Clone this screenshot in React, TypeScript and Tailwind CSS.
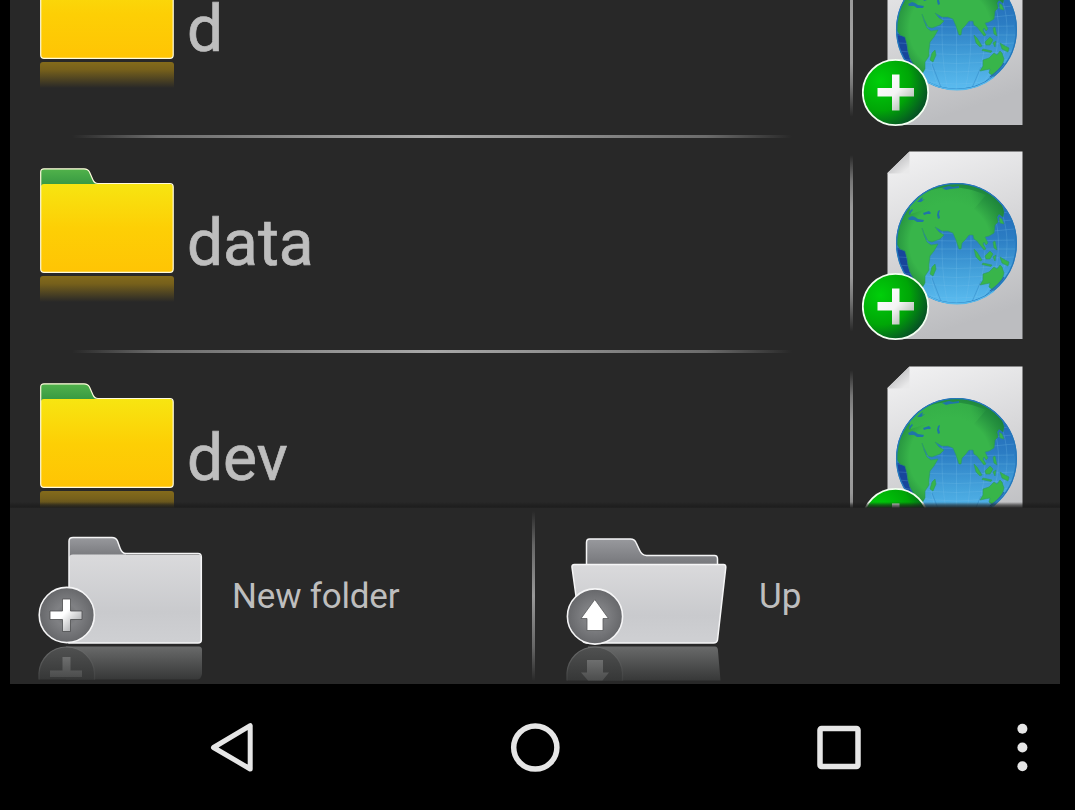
import React from "react";

const LAND = [
  // Eurasia and Africa
  "M7 27 C13 15 22 8 31 4 L38 4 L48 1 L68 0 L79 2 C90 6 99 12 106 22 L108 29 L107 34 L103 31 L101 34 L102 39 L99 42 L98 50 L93 53 L89 54 L92 60 L90 62 L88 59 L87 61 L90 66 L88 67 L81 58 L78 56 L77 52 L73 52 L69 57 L66 60 L65 66 L63 66 L60 57 L57 50 L52 48 L46 48 L39 44 L43 49 L48 52 L44 56 L36 59 L32 58 L28 50 L26 45 L28 52 L31 59 L35 62 L42 61 L38 68 L34 73 L33 81 L33 87 L29 93 L29 100 L26 105 C20 101 17 94 14 89 L12 82 L11 75 L9 68 L4 66 L0 60 C0 46 2 36 7 27 Z",
  // Madagascar
  "M36 84 L39 81 L40 86 L37 93 L34 91 Z",
  // Australia
  "M87 91 L93 89 L98 84 L101 86 L104 82 L106 84 L108 90 L106 97 L101 102 L97 107 L93 104 L94 100 L84 102 L87 97 Z",
  // Sumatra and Java
  "M78 66 L81 69 L86 77 L84 78 L80 74 Z",
  "M87 80 L96 82 L95 83.5 L86 81.5 Z",
  // Borneo
  "M89 73 L94 68 L97 71 L94 76 L90 76 Z",
  // Philippines
  "M97 59 L99 58 L101 67 L98 65 Z",
  // New Guinea
  "M104 74 L109 77 L113 79 L112 83 L106 80 Z",
  // Japan
  "M103 34 L106 36 L108 41 L104 40 Z",
  "M97 74 L100 72 L99 78 Z",
];

const LAKES = [
  "M12 35 L16 33 L19 34 L22 36 L28 37 L27 39 L21 39 L18 37 L13 37 Z",
  "M27 30 L30 29 L33 28 L35 30 L34 31 L31 31 L28 32 Z",
  "M42 28 L44 27 L43 31 L44 35 L42 36 L41 32 Z",
  "M21 19 L24 16 L27 14 L26 17 L29 16 L25 19 Z",
  "M13 29 L16 26 L17 27 L13 32 Z",
  "M46 5 L53 3 L57 4 L63 3 L63 5 L54 6 L50 7 Z",
];

function WebPageIcon() {
  return (
    <svg className="block h-[190px] w-[162px]" viewBox="0 0 162 190" fill="none">
      <defs>
        <linearGradient id="paper" x1="0" y1="0" x2="0.25" y2="1">
          <stop stopColor="#f3f3f4" />
          <stop offset="0.5" stopColor="#d8d8da" />
          <stop offset="1" stopColor="#bcbdc0" />
        </linearGradient>
        <linearGradient id="fold" x1="0.3" y1="0.3" x2="0.8" y2="0.9">
          <stop stopColor="#bcbcbe" />
          <stop offset="1" stopColor="#e9e9ea" />
        </linearGradient>
        <linearGradient id="sea" x1="0" y1="0" x2="0" y2="1">
          <stop stopColor="#1d5eb0" />
          <stop offset="0.45" stopColor="#2b7cc3" />
          <stop offset="0.75" stopColor="#45a3dc" />
          <stop offset="1" stopColor="#5bbcf0" />
        </linearGradient>
        <radialGradient
          id="landShade"
          gradientUnits="userSpaceOnUse"
          cx="54"
          cy="60"
          r="70"
        >
          <stop offset="0.58" stopColor="#064f28" stopOpacity="0" />
          <stop offset="0.8" stopColor="#06582c" stopOpacity="0.38" />
          <stop offset="1" stopColor="#06582c" stopOpacity="0.65" />
        </radialGradient>
        <linearGradient id="northLight" gradientUnits="userSpaceOnUse" x1="20" y1="22" x2="92" y2="8">
          <stop stopColor="#38b54a" stopOpacity="0.9" />
          <stop offset="0.75" stopColor="#38b54a" stopOpacity="0.8" />
          <stop offset="1" stopColor="#38b54a" stopOpacity="0" />
        </linearGradient>
        <radialGradient id="badge" cx="0.27" cy="0.33" r="0.75">
          <stop stopColor="#00cf0a" />
          <stop offset="0.6" stopColor="#00a607" />
          <stop offset="1" stopColor="#065424" />
        </radialGradient>
        <linearGradient id="badgePlus" x1="0" y1="0" x2="1" y2="1">
          <stop stopColor="#fff" />
          <stop offset="0.5" stopColor="#f4f4f4" />
          <stop offset="0.85" stopColor="#b4bfb5" />
        </linearGradient>
        <clipPath id="globe">
          <circle cx="60.5" cy="60.5" r="60" />
        </clipPath>
      </defs>
      <path d="M47.5 0.5H160.5V188H25.5V22Z" fill="url(#paper)" />
      <path d="M47.5 0.5V22.5H25.5V22Z" fill="url(#fold)" />
      <g transform="translate(34 32)">
        <circle cx="60.5" cy="60.5" r="60.5" fill="url(#sea)" />
        <g clipPath="url(#globe)">
          <path d="M0 65L9 64L18 92L27 108H5Z" fill="#17469c" />
          <path
            d="M60.5 0V121M52 0C44 32 44 89 52 121M44 0C28 32 28 89 44 121M69 0C77 32 77 89 69 121M77 0C93 32 93 89 77 121M86 5C108 36 108 86 86 116M25 12C5 36 5 86 25 110M96 12C116 36 116 86 96 110M0 66H121M3 57Q60 59 118 57M3 49Q60 53 118 46M5 41Q60 44 116 37M8 33Q61 37 113 29M3 74Q60 78 118 74M3 82Q60 89 118 82M5 90Q60 99 116 90M12 98Q61 108 109 98M28 112Q60 118 93 112"
            stroke="#7cc6ef"
            strokeWidth="0.6"
            opacity="0.38"
          />
          <path d="M24 100L36 121M36 95L46 121M75 121L85 98M88 114L98 104" stroke="#2577b5" strokeWidth="0.6" opacity="0.6" />
          {LAND.map((d) => (
            <path key={d} d={d} fill="#38b54a" stroke="#2b9a63" strokeWidth="0.6" />
          ))}
          <path d={LAND[0]} fill="url(#landShade)" />
          <path d="M13 22C31 1 62 0 90 12L78 26L42 22L15 31Z" fill="url(#northLight)" />
          {LAKES.map((d) => (
            <path key={d} d={d} fill="#1f74a8" />
          ))}
          <path d="M94 108Q104 101 108 94" stroke="#266daf" strokeWidth="1.5" />
        </g>
        <circle cx="60.5" cy="60.5" r="59.8" stroke="#2577bb" strokeWidth="1.3" />
        <path d="M24 108A60 60 0 0 0 98 108" stroke="#58b9ec" strokeWidth="1.5" />
      </g>
      <circle cx="33.5" cy="155.5" r="32.7" fill="url(#badge)" stroke="#f3fff2" strokeWidth="1.8" />
      <path
        d="M30 137.5H37.5V151H52V159.5H37.5V173.5H30V159.5H15.5V151H30Z"
        fill="url(#badgePlus)"
      />
    </svg>
  );
}

function FolderIcon() {
  return (
    <svg className="block h-[136px] w-[134px] shrink-0" viewBox="0 0 134 136" fill="none">
      <defs>
        <linearGradient id="yellow" x1="0" y1="0" x2="0" y2="1">
          <stop stopColor="#f7e511" />
          <stop offset="0.5" stopColor="#fdcf05" />
          <stop offset="1" stopColor="#ffc404" />
        </linearGradient>
        <linearGradient id="tab" x1="0" y1="0" x2="0" y2="1">
          <stop stopColor="#51b24b" />
          <stop offset="1" stopColor="#349641" />
        </linearGradient>
        <linearGradient id="yellowMirror" x1="0" y1="0" x2="0" y2="1">
          <stop stopColor="#846b1b" />
          <stop offset="0.3" stopColor="#76601b" />
          <stop offset="1" stopColor="#282828" />
        </linearGradient>
      </defs>
      <path
        d="M0.7 17V4Q0.7 0.8 4 0.8H44Q48 0.8 49.5 4L53 12Q54.5 15.5 58 15.5V19H0.7Z"
        fill="url(#tab)"
      />
      <path
        d="M0.7 20Q0.7 16 4 16H130Q133.2 16 133.2 19V101Q133.2 104.3 130 104.3H4Q0.7 104.3 0.7 101Z"
        fill="url(#yellow)"
      />
      <path
        d="M0.7 17V4Q0.7 0.8 4 0.8H44Q48 0.8 49.5 4L53 12Q54.5 15.5 58 15.5H130Q133.2 15.5 133.2 19V101Q133.2 104.3 130 104.3H4Q0.7 104.3 0.7 101Z"
        stroke="#fffbdc"
        strokeWidth="1.2"
      />
      <path d="M0 111Q0 108 3 108H131Q134 108 134 111V134H0Z" fill="url(#yellowMirror)" />
    </svg>
  );
}

function GreyDefs() {
  return (
    <defs>
      <linearGradient id="silver" x1="0" y1="0" x2="0" y2="1">
        <stop stopColor="#dadadc" />
        <stop offset="0.65" stopColor="#c9cacd" />
        <stop offset="1" stopColor="#cfd0d3" />
      </linearGradient>
      <linearGradient id="greyTab" x1="0" y1="0" x2="0" y2="1">
        <stop stopColor="#98999d" />
        <stop offset="1" stopColor="#727377" />
      </linearGradient>
      <radialGradient id="greyBadge">
        <stop stopColor="#6d6e70" />
        <stop offset="0.4" stopColor="#808184" />
        <stop offset="1" stopColor="#66676a" />
      </radialGradient>
      <linearGradient id="greyMirror" x1="0" y1="0" x2="0" y2="1">
        <stop stopColor="#696a6a" />
        <stop offset="1" stopColor="#373838" />
      </linearGradient>
      <linearGradient id="badgeMirror" x1="0" y1="0" x2="0" y2="1">
        <stop stopColor="#505151" />
        <stop offset="1" stopColor="#363737" />
      </linearGradient>
      <linearGradient id="rimMirror" x1="0" y1="0" x2="0" y2="1">
        <stop stopColor="#6c6d6d" />
        <stop offset="1" stopColor="#3f4040" />
      </linearGradient>
      <linearGradient id="signMirror" x1="0" y1="0" x2="0" y2="1">
        <stop stopColor="#6e6f6f" />
        <stop offset="1" stopColor="#4c4d4d" />
      </linearGradient>
      <linearGradient id="greyPlus" x1="0" y1="0" x2="1" y2="1">
        <stop offset="0.45" stopColor="#fff" />
        <stop offset="0.8" stopColor="#b7b8ba" />
      </linearGradient>
    </defs>
  );
}

function NewFolderIcon() {
  return (
    <svg className="block h-[145px] w-[166px] shrink-0" viewBox="0 0 166 145" fill="none">
      <GreyDefs />
      <path
        d="M31 22V5Q31 1.5 35 1.5H74Q78 1.5 79.5 5L82 12Q84 17.5 88 17.5V24H31Z"
        fill="url(#greyTab)"
      />
      <path
        d="M31 22Q31 18.5 35 18.5H160Q163.3 18.5 163.3 22V104Q163.3 107 160 107H31Z"
        fill="url(#silver)"
      />
      <path
        d="M31 107V5Q31 1.5 35 1.5H74Q78 1.5 79.5 5L82 12Q84 17.5 88 17.5H160Q163.3 17.5 163.3 21V104Q163.3 107 160 107Z"
        stroke="#f5f5f6"
        strokeWidth="1.5"
      />
      <circle cx="28.8" cy="79" r="27.6" fill="url(#greyBadge)" stroke="#f5f5f6" strokeWidth="1.6" />
      <path
        d="M24.5 63H32.5V75H44V83.5H32.5V95.5H24.5V83.5H12V75H24.5Z"
        fill="url(#greyPlus)"
        stroke="#4b4c4e"
        strokeWidth="0.8"
      />
      <path d="M28 110.5H161Q164 110.5 164 114V138Q163 143.5 159 143.5H28Z" fill="url(#greyMirror)" />
      <path
        d="M1 143.5V137C2 123 13 111 28.8 111C44 111 56 123 56.5 137V143.5Z"
        fill="url(#badgeMirror)"
      />
      <path
        d="M1 143.5V137C2 123 13 111 28.8 111C44 111 56 123 56.5 137V143.5"
        stroke="url(#rimMirror)"
        strokeWidth="1.2"
      />
      <path d="M24.5 121H32.5V134.5H44V141H12V134.5H24.5Z" fill="url(#signMirror)" />
    </svg>
  );
}

function UpFolderIcon() {
  return (
    <svg className="block h-[145px] w-[162px] shrink-0" viewBox="0 0 162 145" fill="none">
      <path
        d="M20.5 32V6.5Q20.5 3 23.5 3H64.5Q68.5 3 70 6.5L73.5 14Q76 19.5 80.5 19.5H148.5Q151.5 19.5 151.5 23V32Z"
        fill="url(#greyTab)"
        stroke="#f5f5f6"
        strokeWidth="1.5"
      />
      <path
        d="M8.5 28.5H157.5Q160 28.5 159.8 31.5L151.5 104Q151 107 147.5 107H20.5Q16.5 107 16 103L6 31.5Q5.5 28.5 8.5 28.5Z"
        fill="url(#silver)"
        stroke="#f5f5f6"
        strokeWidth="1.5"
      />
      <circle cx="29" cy="80.5" r="27.6" fill="url(#greyBadge)" stroke="#f5f5f6" strokeWidth="1.6" />
      <path
        d="M28.8 63.5L42.5 82.5H37V94.5H21V82.5H15Z"
        fill="#fff"
        stroke="#58595b"
        strokeWidth="0.8"
      />
      <path d="M22 110.5H149Q152 110.5 152 115L154.5 144.5H22Z" fill="url(#greyMirror)" />
      <path
        d="M1 144.5V137C2 123 13 111 29 111C44 111 56 123 56.5 137V144.5Z"
        fill="url(#badgeMirror)"
      />
      <path
        d="M1 144.5V137C2 123 13 111 29 111C44 111 56 123 56.5 137V144.5"
        stroke="url(#rimMirror)"
        strokeWidth="1.2"
      />
      <path d="M21 124H37V136.5H43L36.5 144.5H22L15 136.5H21Z" fill="url(#signMirror)" />
    </svg>
  );
}

const ROWS = [
  { name: "d", size: "h-[214px]" },
  { name: "data", size: "h-[215px]" },
  { name: "dev", size: "h-[215px]" },
];

function FileRow({ name, size }: { name: string; size: string }) {
  return (
    <li className={`flex shrink-0 ${size}`}>
      <div className="flex w-[840px] flex-col">
        <div className="flex flex-1 items-start pt-[30px] pl-[30px]">
          <FolderIcon />
          <span className="mt-[38px] ml-[13px] text-[64px] leading-[76px] text-[#bebebe] [-webkit-text-stroke:0.7px_#bebebe]">
            {name}
          </span>
        </div>
        <div className="ml-[62px] h-[3px] w-[720px] bg-[linear-gradient(90deg,transparent,#6c6c6c_12%,#939393_35%,#a8a8a8_50%,#939393_65%,#6c6c6c_88%,transparent)]" />
      </div>
      <div className="w-[3px] bg-[linear-gradient(180deg,transparent_8%,#777_20%,#999_32%,#a0a0a0_50%,#999_65%,#777_75%,transparent_90%)]" />
      <div className="pt-[13px] pl-[9px]">
        <WebPageIcon />
      </div>
    </li>
  );
}

export default function App() {
  return (
    <div className="flex h-[810px] w-[1075px] flex-col overflow-hidden bg-black font-[Roboto,sans-serif]">
      <main className="mr-[15px] ml-[10px] flex h-[684px] flex-col bg-[#282828]">
        <ul className="flex h-[508px] flex-col overflow-hidden">
          <li className="-mt-[76px]" />
          {ROWS.map((row) => (
            <FileRow key={row.name} {...row} />
          ))}
        </ul>
        <div className="z-10 -mt-[6px] h-[6px] bg-[linear-gradient(180deg,transparent,rgba(28,28,28,0.6)_50%,rgba(28,28,28,0.8)_80%,#222)]" />
        <div className="flex h-[176px]">
          <button className="flex w-[522px] items-start pt-[28px] pl-[28px]">
            <NewFolderIcon />
            <span className="mt-[37px] ml-[28px] text-[35px] leading-[48px] tracking-[-0.2px] text-[#bebebe]">
              New folder
            </span>
          </button>
          <div className="mt-[3px] h-[170px] w-[3px] bg-[linear-gradient(180deg,transparent,#666_20%,#999_50%,#666_80%,transparent)]" />
          <button className="flex items-start pt-[28px] pl-[31px]">
            <UpFolderIcon />
            <span className="mt-[37px] ml-[31px] text-[35px] leading-[48px] text-[#bebebe]">Up</span>
          </button>
        </div>
      </main>
      <nav className="flex h-[126px] items-start pt-[38px] pl-[209px]">
        <svg className="h-[52px] w-[46px]" viewBox="0 0 46 52" fill="none">
          <path
            d="M41.2 3.7V47L4.5 25.5Z"
            stroke="#e6e6e6"
            strokeWidth="5"
            strokeLinejoin="round"
          />
        </svg>
        <svg className="ml-[255px] h-[52px] w-[52px]" viewBox="0 0 52 52" fill="none">
          <circle cx="25.3" cy="25.5" r="21.6" stroke="#e6e6e6" strokeWidth="5.5" />
        </svg>
        <svg className="ml-[254px] h-[52px] w-[48px]" viewBox="0 0 48 52" fill="none">
          <rect x="4" y="6.5" width="38" height="38" rx="1.5" stroke="#e6e6e6" strokeWidth="5.5" />
        </svg>
        <svg className="ml-[152px] h-[52px] w-[14px]" viewBox="0 0 14 52" fill="#e6e6e6">
          <circle cx="6.4" cy="6.7" r="5" />
          <circle cx="6.4" cy="25.5" r="5" />
          <circle cx="6.4" cy="44.3" r="5" />
        </svg>
      </nav>
    </div>
  );
}
